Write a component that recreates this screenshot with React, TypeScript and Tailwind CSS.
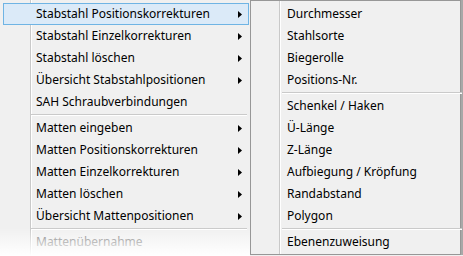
type Item = { label: string; sub?: boolean; active?: boolean; disabled?: boolean } | 'sep';

const mainItems: Item[] = [
  { label: 'Stabstahl Positionskorrekturen', sub: true, active: true },
  { label: 'Stabstahl Einzelkorrekturen', sub: true },
  { label: 'Stabstahl löschen', sub: true },
  { label: 'Übersicht Stabstahlpositionen', sub: true },
  { label: 'SAH Schraubverbindungen' },
  'sep',
  { label: 'Matten eingeben', sub: true },
  { label: 'Matten Positionskorrekturen', sub: true },
  { label: 'Matten Einzelkorrekturen', sub: true },
  { label: 'Matten löschen', sub: true },
  { label: 'Übersicht Mattenpositionen', sub: true },
  'sep',
  { label: 'Mattenübernahme', disabled: true },
];

const subItems: Item[] = [
  { label: 'Durchmesser' },
  { label: 'Stahlsorte' },
  { label: 'Biegerolle' },
  { label: 'Positions-Nr.' },
  'sep',
  { label: 'Schenkel / Haken' },
  { label: 'Ü-Länge' },
  { label: 'Z-Länge' },
  { label: 'Aufbiegung / Kröpfung' },
  { label: 'Randabstand' },
  { label: 'Polygon' },
  'sep',
  { label: 'Ebenenzuweisung' },
];

function Arrow() {
  return (
    <svg width="4" height="7" viewBox="0 0 4 7" className="ml-auto mr-[6px] shrink-0">
      <path d="M0 0 L4 3.5 L0 7 Z" fill="#000" />
    </svg>
  );
}

function MenuRows({ items, sepWidth }: { items: Item[]; sepWidth: string }) {
  return (
    <>
      {items.map((it, i) =>
        it === 'sep' ? (
          <div key={i} className="h-[4px] pt-[1px] pl-[31px]">
            <div className={`${sepWidth} h-[1px] bg-[#cacaca]`} />
            <div className={`${sepWidth} h-[1px] bg-white`} />
          </div>
        ) : (
          <div
            key={i}
            className={
              'flex h-[22px] items-center pl-[32px] ' +
              (it.active ? 'ml-[3px] pl-[31px] border border-[#6fb4e4] bg-[#dbeaf8]' : 'ml-[3px] border border-transparent') +
              (it.disabled ? ' text-[#7a7a7a]' : ' text-black')
            }
          >
            <span className="whitespace-nowrap">{it.label}</span>
            {it.sub && <Arrow />}
          </div>
        )
      )}
    </>
  );
}

export default function App() {
  return (
    <div
      className="flex h-[256px] w-[463px] overflow-hidden bg-[#f0f0f0] text-[12px] leading-none"
      style={{ fontFamily: '"Segoe UI", "Noto Sans", "Open Sans", sans-serif' }}
    >
      <div className="relative w-[250px] shrink-0 pt-[3px] pr-[1px] bg-[linear-gradient(to_right,transparent_30px,#c9c9c9_30px,#c9c9c9_31px,#ffffff_31px,#ffffff_32px,transparent_32px)]">
        <MenuRows items={mainItems} sepWidth="w-[216px]" />
        <div className="pointer-events-none absolute inset-x-0 bottom-0 h-[28px] bg-gradient-to-b from-[#f0f0f000] to-white" />
      </div>
      <div className="h-[255px] w-[211px] shrink-0 border border-[#979797] bg-[#f0f0f0] pt-[2px] pr-[1px] shadow-[2px_0_0_#a8a8a8] bg-[linear-gradient(to_right,transparent_28px,#c9c9c9_28px,#c9c9c9_29px,#ffffff_29px,#ffffff_30px,transparent_30px)]">
        <MenuRows items={subItems} sepWidth="w-[180px]" />
      </div>
    </div>
  );
}
